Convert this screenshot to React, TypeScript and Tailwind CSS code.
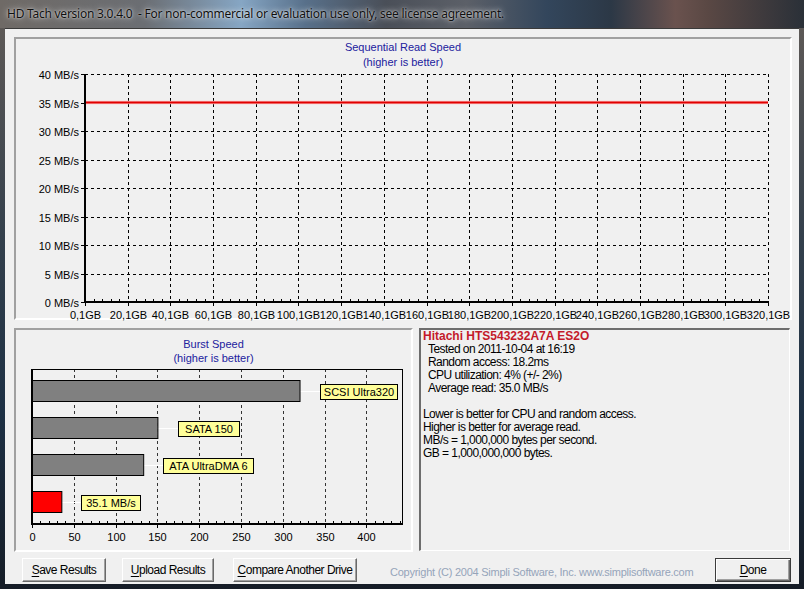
import React from 'react'

const FONT = "font-['Liberation_Sans',Arial,sans-serif]"

const GB_LABELS = Array.from({ length: 17 }, (_, i) => `${i * 20},1GB`)
const MB_LABELS = [40, 35, 30, 25, 20, 15, 10, 5, 0]

const crisp = (v: number) => Math.round(v) + 0.5

function SequentialChart() {
  const x0 = 69
  const x1 = 752
  const y0 = 4
  const y1 = 232
  const dx = (x1 - x0) / 16
  const dy = (y1 - y0) / 8
  const minor: number[] = []
  for (let i = 0; i < 80; i++) if (i % 5 !== 0) minor.push(x0 + (i * dx) / 5)

  return (
    <svg width={772} height={249} className="block overflow-visible">
      {MB_LABELS.map((mb, i) => {
        const y = crisp(y0 + i * dy)
        return (
          <g key={mb}>
            {i < 8 && <line x1={x0} x2={x1} y1={y} y2={y} stroke="#000" strokeDasharray="3 3" />}
            <line x1={x0 - 4} x2={x0} y1={y} y2={y} stroke="#000" />
            <text x={63} y={y + 4} textAnchor="end" fontSize={11} fill="#000">
              {mb} MB/s
            </text>
          </g>
        )
      })}
      {GB_LABELS.map((label, i) => {
        const x = crisp(x0 + i * dx)
        return (
          <g key={label}>
            {i > 0 && <line x1={x} x2={x} y1={y0} y2={y1} stroke="#000" strokeDasharray="3 3" />}
            <line x1={x} x2={x} y1={y1} y2={y1 + 4} stroke="#000" />
            <text x={x} y={249} textAnchor="middle" fontSize={11} fill="#000">
              {label}
            </text>
          </g>
        )
      })}
      {minor.map((x, i) => (
        <line key={i} x1={crisp(x)} x2={crisp(x)} y1={y1 - 3} y2={y1} stroke="#000" />
      ))}
      <line x1={x0} x2={x1} y1={y0 + dy} y2={y0 + dy} stroke="#ffc4c4" strokeWidth={3.5} />
      <line x1={x0} x2={x1} y1={y0 + dy} y2={y0 + dy} stroke="#e00000" strokeWidth={2} />
      <line x1={x0} x2={x0} y1={y0} y2={y1 + 1} stroke="#000" strokeWidth={2} />
      <line x1={x0 - 1} x2={x1 + 1} y1={y1} y2={y1} stroke="#000" strokeWidth={2} />
    </svg>
  )
}

const BARS = [
  { value: 320, label: 'SCSI Ultra320', fill: '#808080', lx: 304, lw: 77 },
  { value: 150, label: 'SATA 150', fill: '#808080', lx: 162, lw: 61 },
  { value: 133, label: 'ATA UltraDMA 6', fill: '#808080', lx: 147, lw: 90 },
  { value: 35.1, label: '35.1 MB/s', fill: '#ff0000', lx: 65, lw: 59 },
]

function BurstChart() {
  const x0 = 16
  const x1 = 386
  const y0 = 4
  const y1 = 159
  const k = 0.836
  const minor: number[] = []
  for (let v = 10; v < 443; v += 10) if (v % 50 !== 0) minor.push(x0 + v * k)

  return (
    <svg width={395} height={185} className="block">
      {[50, 100, 150, 200, 250, 300, 350, 400].map((v) => {
        const x = crisp(x0 + v * k)
        return <line key={v} x1={x} x2={x} y1={y0} y2={y1} stroke="#333" strokeDasharray="3 3" />
      })}
      {[0, 50, 100, 150, 200, 250, 300, 350, 400].map((v) => {
        const x = crisp(x0 + v * k)
        return (
          <g key={v}>
            <line x1={x} x2={x} y1={y1} y2={y1 + 4} stroke="#000" />
            <text x={x} y={176} textAnchor="middle" fontSize={11} fill="#000">
              {v}
            </text>
          </g>
        )
      })}
      {minor.map((x, i) => (
        <line key={i} x1={crisp(x)} x2={crisp(x)} y1={y1 - 3} y2={y1} stroke="#000" />
      ))}
      {BARS.map((b, i) => {
        const top = 15 + i * 37
        const end = x0 + b.value * k
        return (
          <g key={b.label}>
            <line x1={end} x2={b.lx} y1={top + 11.5} y2={top + 11.5} stroke="#ffffff" />
            <rect x={x0 + 0.5} y={top + 0.5} width={end - x0} height={21} fill={b.fill} stroke="#000" />
            <rect x={b.lx + 0.5} y={top + 4.5} width={b.lw} height={15} fill="#ffff99" stroke="#000" />
            <text x={b.lx + b.lw / 2 + 0.5} y={top + 16} textAnchor="middle" fontSize={11} fill="#000">
              {b.label}
            </text>
          </g>
        )
      })}
      <line x1={x0} x2={x1} y1={crisp(y0)} y2={crisp(y0)} stroke="#000" />
      <line x1={crisp(x1)} x2={crisp(x1)} y1={y0} y2={y1} stroke="#000" />
      <line x1={x0} x2={x0} y1={y0} y2={y1 + 1} stroke="#000" strokeWidth={2} />
      <line x1={x0 - 1} x2={x1 + 1} y1={y1} y2={y1} stroke="#000" strokeWidth={2} />
    </svg>
  )
}

function Button({ mnemonic, rest, className }: { mnemonic: string; rest: string; className: string }) {
  return (
    <button
      className={`h-[24px] shrink-0 bg-[#f0f0f0] border border-t-white border-l-white border-b-[#696969] border-r-[#696969] shadow-[inset_-1px_-1px_0_#a0a0a0] text-[12px] tracking-[-0.5px] text-black ${className}`}
    >
      <span className="underline underline-offset-2">{mnemonic}</span>
      {rest}
    </button>
  )
}

export default function App() {
  return (
    <div
      className={`w-[804px] h-[589px] flex flex-col overflow-hidden bg-[linear-gradient(180deg,#625c58_0%,#34404c_40%,#1d3044_70%,#151c26_100%)] ${FONT}`}
    >
      <div className="h-[28px] shrink-0 flex items-center pl-[7px] bg-[linear-gradient(90deg,#6f6a66_0%,#6b6e73_18%,#86a6c4_30%,#58708a_38%,#4a4f58_48%,#5c6068_58%,#33465c_68%,#2c3846_76%,#6a524e_84%,#5a4844_88%,#2a3038_100%)]">
        <span className="font-['Noto_Sans',sans-serif] text-[12px] tracking-[-0.25px] text-[#101010] [text-shadow:0_0_6px_rgba(255,255,255,0.9),0_0_2px_rgba(255,255,255,0.7)] whitespace-pre">
          HD Tach version 3.0.4.0  - For non-commercial or evaluation use only, see license agreement.
        </span>
      </div>

      <div className="mx-[5px] h-[556px] shrink-0 bg-[#f0f0f0] border-t border-[#3a3a3a] pt-[8px] pl-[9px] pr-[7px] flex flex-col">
        <div className="h-[283px] border-2 border-t-[#a0a0a0] border-l-[#a0a0a0] border-b-white border-r-white flex flex-col">
          <div className="pt-[1px] text-center text-[11px] leading-[15px] text-[#21219e]">
            <div>Sequential Read Speed</div>
            <div>(higher is better)</div>
          </div>
          <SequentialChart />
        </div>

        <div className="mt-[8px] h-[224px] flex gap-[6px]">
          <div className="w-[399px] border-2 border-t-[#a0a0a0] border-l-[#a0a0a0] border-b-white border-r-white flex flex-col">
            <div className="pt-[7px] text-center text-[11px] leading-[14px] text-[#21219e]">
              <div>Burst Speed</div>
              <div>(higher is better)</div>
            </div>
            <BurstChart />
          </div>

          <div className="w-[371px] h-[223px] border-t-2 border-l-2 border-t-[#6d6d6d] border-l-[#6d6d6d] border-b border-r border-b-white border-r-white pl-[2px] text-[12px] leading-[13px] tracking-[-0.55px] text-black">
            <div className="font-bold text-[#c41a2a] tracking-[0px]">Hitachi HTS543232A7A ES2O</div>
            <div className="pl-[5px]">
              <div>Tested on 2011-10-04 at 16:19</div>
              <div>Random access: 18.2ms</div>
              <div>CPU utilization: 4% (+/- 2%)</div>
              <div>Average read: 35.0 MB/s</div>
            </div>
            <div className="h-[13px]" />
            <div>Lower is better for CPU and random access.</div>
            <div>Higher is better for average read.</div>
            <div>MB/s = 1,000,000 bytes per second.</div>
            <div>GB = 1,000,000,000 bytes.</div>
          </div>
        </div>

        <div className="mt-[6px] h-[24px] flex items-center">
          <Button mnemonic="S" rest="ave Results" className="ml-[8px] w-[84px]" />
          <Button mnemonic="U" rest="pload Results" className="ml-[16px] w-[92px]" />
          <Button mnemonic="C" rest="ompare Another Drive" className="ml-[19px] w-[124px]" />
          <span className="ml-[33px] pt-[4px] text-[11px] tracking-[-0.25px] text-[#95a4ba] whitespace-nowrap">
            Copyright (C) 2004 Simpli Software, Inc. www.simplisoftware.com
          </span>
          <div className="flex-1" />
          <button className="mr-[1px] w-[76px] h-[24px] shrink-0 bg-[#f0f0f0] border border-[#3c3c3c] shadow-[inset_1px_1px_0_#fff,inset_-1px_-1px_0_#696969,inset_-2px_-2px_0_#a0a0a0] text-[12px] tracking-[-0.5px] text-black">
            <span className="underline underline-offset-2">D</span>one
          </button>
        </div>
      </div>
    </div>
  )
}
